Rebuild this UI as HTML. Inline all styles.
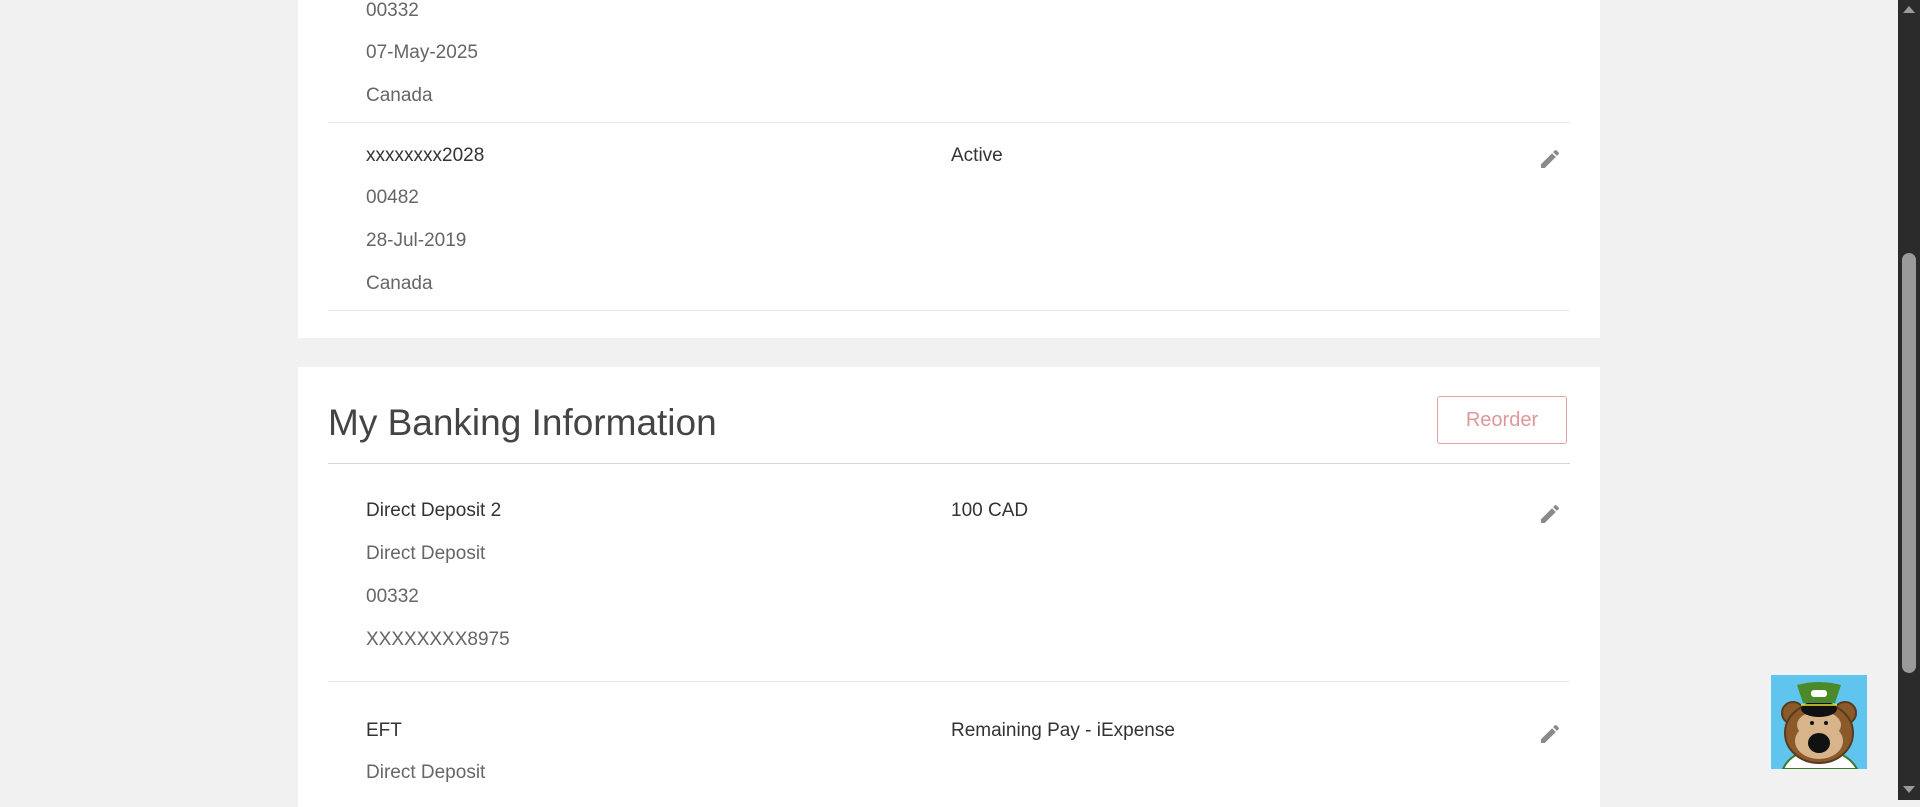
<!DOCTYPE html>
<html><head><style>
body{margin:0;width:1920px;height:800px;background:#f1f1f1;font-family:"Liberation Sans",sans-serif;overflow:hidden;position:relative}
.card{position:absolute;left:298px;width:1302px;background:#fff}
.t{position:absolute;font-size:19px;line-height:24px;color:#666}
.d{color:#333}
.hr{position:absolute;left:30px;width:1242px;height:1px;background:#e6e6e6}
.pen{position:absolute;left:1240px;width:24px;height:24px}
</style></head><body>
<div class="card" style="top:0;height:338px">
<div class="t" style="left:68px;top:-1px">00332</div>
<div class="t" style="left:68px;top:41px">07-May-2025</div>
<div class="t" style="left:68px;top:84px">Canada</div>
<div class="hr" style="top:122px"></div>
<div class="t d" style="left:68px;top:144px">xxxxxxxx2028</div>
<div class="t d" style="left:653px;top:144px">Active</div>
<svg class="pen" style="top:147px" viewBox="0 0 24 24"><path fill="#8a8a8a" d="M3 17.25V21h3.75L17.81 9.94l-3.75-3.75L3 17.25zM20.71 7.04a1 1 0 0 0 0-1.41l-2.34-2.34a1 1 0 0 0-1.41 0l-1.83 1.83 3.75 3.75 1.83-1.83z"/></svg>
<div class="t" style="left:68px;top:186px">00482</div>
<div class="t" style="left:68px;top:229px">28-Jul-2019</div>
<div class="t" style="left:68px;top:272px">Canada</div>
<div class="hr" style="top:310px"></div>
</div>
<div class="card" style="top:367px;height:440px">
<div style="position:absolute;left:30px;top:33px;font-size:37px;color:#444;line-height:46px">My Banking Information</div>
<div style="position:absolute;left:1139px;top:29px;width:128px;height:46px;border:1px solid #e0a0a0;border-radius:3px;color:#d99;font-size:20px;line-height:46px;text-align:center">Reorder</div>
<div class="hr" style="top:96px;background:#d0d6de"></div>
<div class="t d" style="left:68px;top:132px">Direct Deposit 2</div>
<div class="t d" style="left:653px;top:132px">100 CAD</div>
<svg class="pen" style="top:135px" viewBox="0 0 24 24"><path fill="#8a8a8a" d="M3 17.25V21h3.75L17.81 9.94l-3.75-3.75L3 17.25zM20.71 7.04a1 1 0 0 0 0-1.41l-2.34-2.34a1 1 0 0 0-1.41 0l-1.83 1.83 3.75 3.75 1.83-1.83z"/></svg>
<div class="t" style="left:68px;top:175px">Direct Deposit</div>
<div class="t" style="left:68px;top:218px">00332</div>
<div class="t" style="left:68px;top:261px">XXXXXXXX8975</div>
<div class="hr" style="top:314px"></div>
<div class="t d" style="left:68px;top:352px">EFT</div>
<div class="t d" style="left:653px;top:352px">Remaining Pay - iExpense</div>
<svg class="pen" style="top:355px" viewBox="0 0 24 24"><path fill="#8a8a8a" d="M3 17.25V21h3.75L17.81 9.94l-3.75-3.75L3 17.25zM20.71 7.04a1 1 0 0 0 0-1.41l-2.34-2.34a1 1 0 0 0-1.41 0l-1.83 1.83 3.75 3.75 1.83-1.83z"/></svg>
<div class="t" style="left:68px;top:394px">Direct Deposit</div>
</div>
<svg style="position:absolute;left:1771px;top:675px" width="96" height="94" viewBox="0 0 96 94">
<rect width="96" height="94" fill="#5fc4ee"/>
<path d="M12 94 Q20 76 48 74 Q76 76 86 94Z" fill="#fff" stroke="#3a7a2a" stroke-width="2"/>
<circle cx="22" cy="38" r="11" fill="#8a5a2b" stroke="#5a3a1a" stroke-width="2"/>
<circle cx="74" cy="38" r="11" fill="#8a5a2b" stroke="#5a3a1a" stroke-width="2"/>
<ellipse cx="48" cy="58" rx="34" ry="30" fill="#8a5a2b" stroke="#5a3a1a" stroke-width="2"/>
<ellipse cx="48" cy="66" rx="24" ry="18" fill="#d8b48a"/>
<ellipse cx="48" cy="50" rx="22" ry="14" fill="#d8b48a"/>
<ellipse cx="48" cy="68" rx="11" ry="10" fill="#111"/>
<circle cx="41" cy="48" r="2" fill="#111"/><circle cx="55" cy="48" r="2" fill="#111"/>
<ellipse cx="48" cy="34" rx="18" ry="8" fill="#111"/>
<path d="M26 10 Q48 4 70 10 L64 28 L32 28Z" fill="#4a8a2a"/>
<rect x="40" y="15" width="16" height="7" rx="3" fill="#fff"/>
<path d="M30 30 H66" stroke="#e8e030" stroke-width="1.5"/>
</svg>
<div style="position:absolute;left:1898px;top:0;width:22px;height:800px;background:#2b2b2b"></div>
<div style="position:absolute;left:1902px;top:253px;width:14px;height:420px;border-radius:7px;background:#9a9a9a"></div>
<div style="position:absolute;left:1903px;top:6px;width:0;height:0;border-left:6px solid transparent;border-right:6px solid transparent;border-bottom:7px solid #9a9a9a"></div>
<div style="position:absolute;left:1903px;top:786px;width:0;height:0;border-left:6px solid transparent;border-right:6px solid transparent;border-top:7px solid #9a9a9a"></div>
</body></html>
